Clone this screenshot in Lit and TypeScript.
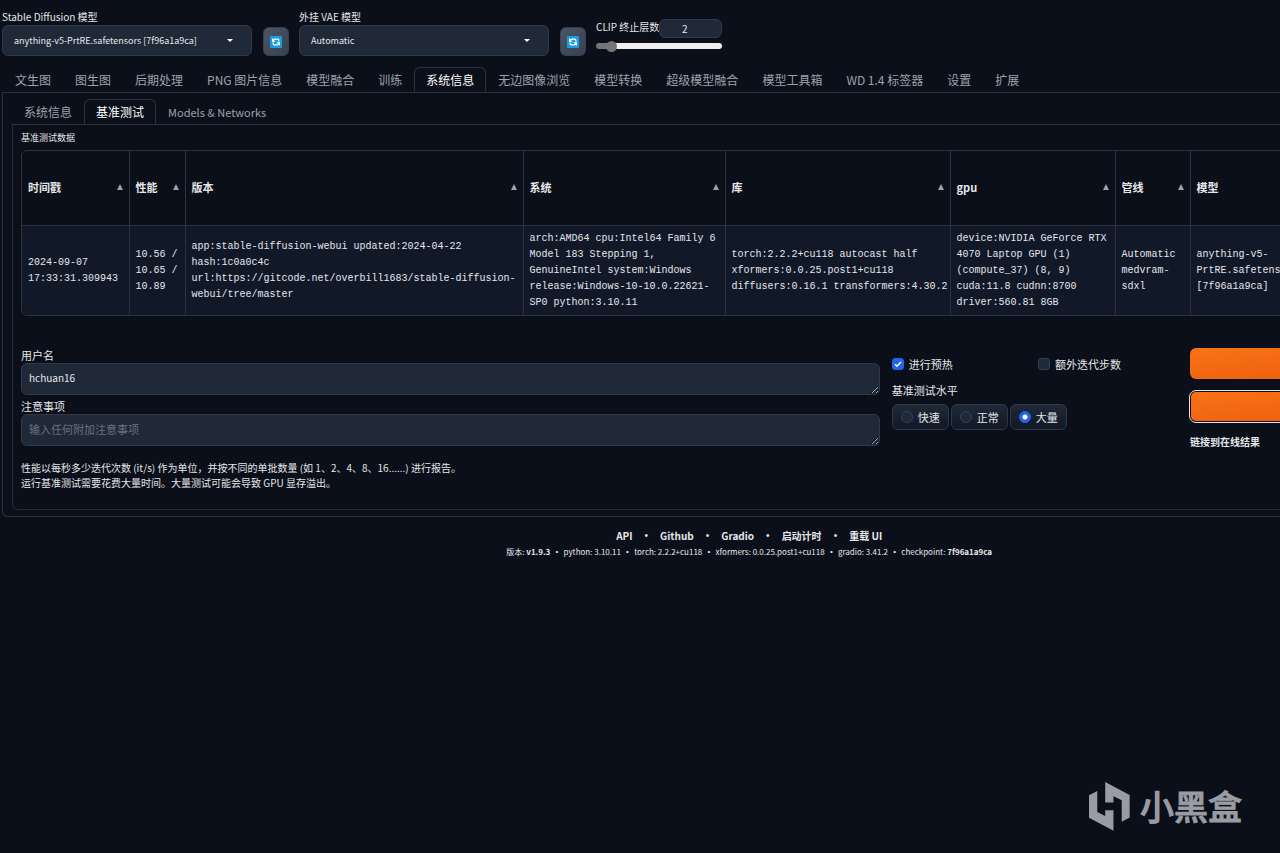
import { LitElement, html, css, svg } from "lit";
import { customElement, state } from "lit/decorators.js";

const MAIN_TABS = [
  "文生图", "图生图", "后期处理", "PNG 图片信息", "模型融合", "训练", "系统信息",
  "无边图像浏览", "模型转换", "超级模型融合", "模型工具箱", "WD 1.4 标签器", "设置", "扩展",
];
const SUB_TABS = ["系统信息", "基准测试", "Models & Networks"];

const COLUMNS = [
  { key: "time", title: "时间戳" },
  { key: "perf", title: "性能" },
  { key: "version", title: "版本" },
  { key: "system", title: "系统" },
  { key: "libs", title: "库" },
  { key: "gpu", title: "gpu" },
  { key: "pipeline", title: "管线" },
  { key: "model", title: "模型" },
  { key: "user", title: "用户名" },
];

const ROWS: Record<string, string>[] = [
  {
    time: "2024-09-07 17:33:31.309943",
    perf: "10.56 / 10.65 / 10.89",
    version:
      "app:stable-diffusion-webui updated:2024-04-22 hash:1c0a0c4c url:https://gitcode.net/overbill1683/stable-diffusion-webui/tree/master",
    system:
      "arch:AMD64 cpu:Intel64 Family 6 Model 183 Stepping 1, GenuineIntel system:Windows release:Windows-10-10.0.22621-SP0 python:3.10.11",
    libs: "torch:2.2.2+cu118 autocast half xformers:0.0.25.post1+cu118 diffusers:0.16.1 transformers:4.30.2",
    gpu: "device:NVIDIA GeForce RTX 4070 Laptop GPU (1) (compute_37) (8, 9) cuda:11.8 cudnn:8700 driver:560.81 8GB",
    pipeline: "Automatic medvram-sdxl",
    model: "anything-v5-PrtRE.safetensors [7f96a1a9ca]",
    user: "hchuan16",
  },
];

const refreshIcon = svg`
  <svg viewBox="0 0 12 12" width="12" height="12" aria-hidden="true">
    <rect width="12" height="12" rx="1" fill="#1b9be0"></rect>
    <path d="M3.2 5.6V4.6a1.4 1.4 0 0 1 1.4-1.4h3a1.4 1.4 0 0 1 1.3 1.4v1" fill="none" stroke="#fff" stroke-width="1.2"></path>
    <path d="M8.8 6.4v1a1.4 1.4 0 0 1-1.4 1.4h-3a1.4 1.4 0 0 1-1.3-1.4v-1" fill="none" stroke="#fff" stroke-width="1.2"></path>
    <path d="M2 2v3.8h3.6z" fill="#fff"></path>
    <path d="M10 10V6.2H6.4z" fill="#fff"></path>
  </svg>`;

@customElement("app-root")
export class AppRoot extends LitElement {
  @state() private mainTab = 6;
  @state() private subTab = 1;
  @state() private clip = 2;
  @state() private level = 2;

  static styles = css`
    :host {
      display: block;
      position: relative;
      min-height: 100vh;
      overflow: hidden;
      background: #0b0f19;
      color: #e5e7eb;
      font: 11px/16px "Noto Sans CJK SC", "Noto Sans", sans-serif;
    }
    *, *::before, *::after { box-sizing: border-box; }
    button, input, select, textarea { font: inherit; color: inherit; margin: 0; }
    button { padding: 0; cursor: pointer; }
    .page { width: 118%; padding: 9px 14px 0 2px; }

    .quick { display: flex; gap: 10px; align-items: flex-start; font-size: 10px; }
    .field { display: flex; gap: 11px; align-items: flex-end; width: 287px; }
    .pick { flex: 1; display: flex; flex-direction: column; }
    .drop { position: relative; display: flex; }
    .drop::after {
      content: "";
      position: absolute;
      right: 19px;
      top: 14px;
      border: 3px solid transparent;
      border-top-color: #fff;
      border-bottom: 0;
      pointer-events: none;
    }
    select {
      flex: 1;
      height: 31px;
      padding: 0 11px;
      font-size: 9px;
      appearance: none;
      background: #1f2937;
      border: 1px solid #2f3947;
      border-radius: 6px;
    }
    .refresh {
      display: grid;
      place-items: center;
      width: 26px;
      height: 29px;
      border: 1px solid #374151;
      border-radius: 6px;
      background: linear-gradient(to bottom right, #4b5563, #374151);
    }
    .clip { width: 126px; padding-top: 10px; display: flex; flex-direction: column; gap: 4px; }
    .cliprow { display: flex; justify-content: space-between; white-space: nowrap; }
    .cliprow input {
      flex: 1;
      min-width: 0;
      height: 19px;
      padding: 0 16px 0 4px;
      text-align: center;
      background: #1f2937;
      border: 1px solid #2f3947;
      border-radius: 6px;
      appearance: textfield;
    }
    .cliprow input::-webkit-inner-spin-button { appearance: none; }
    .range {
      appearance: none;
      width: 100%;
      height: 6px;
      margin-top: 1px;
      border-radius: 3px;
      background: linear-gradient(to right, #757575 var(--fill), #efefef var(--fill));
    }
    .range::-webkit-slider-thumb {
      appearance: none;
      width: 11px;
      height: 11px;
      border-radius: 50%;
      background: #757575;
    }

    .tabs { display: flex; border-bottom: 1px solid #2c333f; }
    .tab {
      height: 25px;
      padding: 0 12px;
      border: 0;
      background: none;
      color: #9ca3af;
      font-size: 12px;
      white-space: nowrap;
    }
    .tab.latin { font-size: 11px; }
    .tab.on {
      margin-bottom: -1px;
      padding: 0 11px;
      border: 1px solid #2c333f;
      border-bottom-color: #0b0f19;
      border-radius: 6px 6px 0 0;
      background: #0b0f19;
      color: #fff;
    }
    .main { margin-top: 11px; padding-left: 1px; }
    .panel {
      border: 1px solid #2c333f;
      border-top: 0;
      border-radius: 0 0 6px 6px;
      padding: 6px 9px;
    }
    .sub { border-color: #252b37; padding: 5px 9px 19px 8px; }

    .caption { font-size: 9px; line-height: 16px; }
    .frame {
      margin-top: 4px;
      border: 1px solid #2c333f;
      border-radius: 6px;
      overflow: hidden;
    }
    table { width: 100%; table-layout: fixed; border-collapse: collapse; }
    th, td { padding: 0 0 0 6px; text-align: left; }
    th + th, td + td { border-left: 1px solid #2c333f; }
    th { height: 74px; padding-bottom: 2px; font-weight: 700; }
    td {
      height: 90px;
      padding-top: 2px;
      background: #111827;
      border-top: 1px solid #2c333f;
      font: 10px/16px "Liberation Mono", monospace;
      vertical-align: middle;
    }
    .head { display: flex; justify-content: space-between; align-items: center; padding-right: 6px; }
    .head::after {
      content: "";
      border: 3px solid transparent;
      border-bottom: 6px solid #9ca3af;
      border-top: 0;
    }
    .c-time { width: 107px; }
    .c-perf { width: 56px; }
    .c-version { width: 338px; }
    .c-system { width: 202px; }
    .c-libs { width: 225px; }
    .c-gpu { width: 165px; }
    .c-pipeline { width: 75px; }
    .c-model { width: 130px; }

    .form { display: grid; grid-template-columns: 3fr 1fr 1fr; gap: 12px; margin-top: 32px; }
    .texts { display: flex; flex-direction: column; }
    .texts label { line-height: 15px; }
    .texts label + textarea { margin-bottom: 4px; }
    textarea {
      display: block;
      width: 100%;
      height: 32px;
      padding: 6px 7px;
      font-size: 10px;
      resize: vertical;
      overflow: hidden;
      background: #1f2937;
      border: 1px solid #2f3947;
      border-radius: 6px;
    }
    textarea::placeholder { color: #6b7280; font-size: 11px; }

    .checks { display: grid; grid-template-columns: 1fr 1fr; gap: 6px; margin-top: 8px; }
    .opt { display: flex; align-items: center; gap: 5px; }
    .opt input {
      appearance: none;
      width: 12px;
      height: 12px;
      border: 1px solid #374151;
      border-radius: 3px;
      background: #1f2937 center / 10px 10px no-repeat;
    }
    .opt input:checked { background-color: #2563eb; border-color: #2563eb; }
    .opt input[type="checkbox"]:checked {
      background-image: url("data:image/svg+xml,%3Csvg xmlns='http://www.w3.org/2000/svg' viewBox='0 0 10 10'%3E%3Cpath d='M2 5.2l2 2 4-4.2' fill='none' stroke='white' stroke-width='1.5'/%3E%3C/svg%3E");
    }
    .opt input[type="radio"] { border-radius: 50%; }
    .opt input[type="radio"]:checked {
      background-image: radial-gradient(circle, #fff 0 2px, transparent 3px);
    }
    fieldset { margin: 10px 0 0; padding: 0; border: 0; }
    legend { padding: 0; }
    .radios { display: flex; gap: 2px; margin-top: 6px; }
    .radios .opt {
      height: 26px;
      padding: 0 8px;
      border: 1px solid #2f3947;
      border-radius: 6px;
      background: linear-gradient(to top, #111827, #1f2937);
    }

    .actions { display: flex; flex-direction: column; gap: 12px; font-size: 10px; }
    .go {
      height: 31px;
      border: 0;
      border-radius: 6px;
      background: linear-gradient(to bottom right, #f97316, #ea580c);
    }
    .go.focus { box-shadow: inset 0 0 0 1px #0b0f19; outline: 1px solid #e5e7eb; outline-offset: 0; }
    a { color: inherit; text-decoration: none; font-weight: 700; }
    .notes { margin: 10px 0 0; font-size: 10px; line-height: 15px; }

    footer { margin-top: 11px; text-align: center; }
    .links, .versions { display: flex; justify-content: center; }
    .links { gap: 12px; font-size: 10px; }
    .versions { gap: 3px; font-size: 8px; line-height: 15px; white-space: pre; }
    .dot { font-family: "Liberation Sans", sans-serif; }

    .mark {
      position: absolute;
      right: 38px;
      bottom: 21px;
      display: flex;
      align-items: center;
      gap: 10px;
      color: #9a9ca3;
      font-size: 34px;
      line-height: 52px;
      font-weight: 500;
      -webkit-text-stroke: 1px currentColor;
    }
  `;

  private tabs(items: string[], current: number, pick: (i: number) => void, extra = "") {
    return html`<div class="tabs ${extra}" role="tablist">
      ${items.map(
        (t, i) => html`<button
          class="tab ${i === current ? "on" : ""} ${/^[ -~]+$/.test(t) ? "latin" : ""}"
          role="tab"
          aria-selected=${i === current}
          @click=${() => pick(i)}
        >${t}</button>`,
      )}
    </div>`;
  }

  private picker(id: string, label: string, value: string) {
    return html`<div class="field">
      <div class="pick">
        <label for=${id}>${label}</label>
        <div class="drop"><select id=${id}><option>${value}</option></select></div>
      </div>
      <button class="refresh" aria-label="刷新">${refreshIcon}</button>
    </div>`;
  }

  private joined(parts: unknown[]) {
    return parts.map((p, i) => html`${i ? html`<span class="dot"> • </span>` : ""}${p}`);
  }

  render() {
    const fill = ((this.clip - 1) / 11) * 100;
    return html`
      <div class="page">
        <div class="quick">
          ${this.picker("sd", "Stable Diffusion 模型", "anything-v5-PrtRE.safetensors [7f96a1a9ca]")}
          ${this.picker("vae", "外挂 VAE 模型", "Automatic")}
          <div class="clip">
            <div class="cliprow">
              <label for="clip">CLIP 终止层数</label>
              <input id="clip" type="number" min="1" max="12" .value=${String(this.clip)}
                @input=${(e: Event) => (this.clip = Number((e.target as HTMLInputElement).value))} />
            </div>
            <input class="range" type="range" aria-label="CLIP 终止层数" min="1" max="12"
              style="--fill:${fill}%" .value=${String(this.clip)}
              @input=${(e: Event) => (this.clip = Number((e.target as HTMLInputElement).value))} />
          </div>
        </div>

        ${this.tabs(MAIN_TABS, this.mainTab, (i) => (this.mainTab = i), "main")}
        <div class="panel">
          ${this.tabs(SUB_TABS, this.subTab, (i) => (this.subTab = i))}
          <div class="panel sub">
            <div class="caption">基准测试数据</div>
            <div class="frame">
              <table aria-label="基准测试数据">
                <thead>
                  <tr>${COLUMNS.map((c) => html`<th class="c-${c.key}"><div class="head">${c.title}</div></th>`)}</tr>
                </thead>
                <tbody>
                  ${ROWS.map((r) => html`<tr>${COLUMNS.map((c) => html`<td>${r[c.key]}</td>`)}</tr>`)}
                </tbody>
              </table>
            </div>

            <div class="form">
              <div class="texts">
                <label for="user">用户名</label>
                <textarea id="user" rows="1" .value=${"hchuan16"}></textarea>
                <label for="note">注意事项</label>
                <textarea id="note" rows="1" placeholder="输入任何附加注意事项"></textarea>
              </div>
              <div>
                <div class="checks">
                  <label class="opt"><input type="checkbox" checked />进行预热</label>
                  <label class="opt"><input type="checkbox" />额外迭代步数</label>
                </div>
                <fieldset>
                  <legend>基准测试水平</legend>
                  <div class="radios">
                    ${["快速", "正常", "大量"].map(
                      (t, i) => html`<label class="opt"><input type="radio" name="level"
                        .checked=${i === this.level} @change=${() => (this.level = i)} />${t}</label>`,
                    )}
                  </div>
                </fieldset>
              </div>
              <div class="actions">
                <button class="go" aria-label="运行基准测试"></button>
                <button class="go focus" aria-label="提交结果"></button>
                <a href="#results">链接到在线结果</a>
              </div>
            </div>
            <p class="notes">
              性能以每秒多少迭代次数 (it/s) 作为单位，并按不同的单批数量 (如 1、2、4、8、16......) 进行报告。<br />
              运行基准测试需要花费大量时间。大量测试可能会导致 GPU 显存溢出。
            </p>
          </div>
        </div>

        <footer>
          <div class="links">
            ${this.joined(["API", "Github", "Gradio", "启动计时", "重载 UI"].map((t) => html`<a href="#">${t}</a>`))}
          </div>
          <div class="versions">${this.joined([
            html`<span>版本: <b>v1.9.3</b></span>`,
            html`<span>python: 3.10.11</span>`,
            html`<span>torch: 2.2.2+cu118</span>`,
            html`<span>xformers: 0.0.25.post1+cu118</span>`,
            html`<span>gradio: 3.41.2</span>`,
            html`<span>checkpoint: <b>7f96a1a9ca</b></span>`,
          ])}</div>
        </footer>
      </div>

      <div class="mark">
        <svg viewBox="57 37 124 148" width="41" height="49" fill="currentColor" aria-hidden="true">
          <path d="M57 77L82 64V128L106 140V122H131V184L57 145Z"></path>
          <path d="M106 37L180 76V144L156 157V92L131 80V99H106Z"></path>
        </svg>
        <span>小黑盒</span>
      </div>
    `;
  }
}
